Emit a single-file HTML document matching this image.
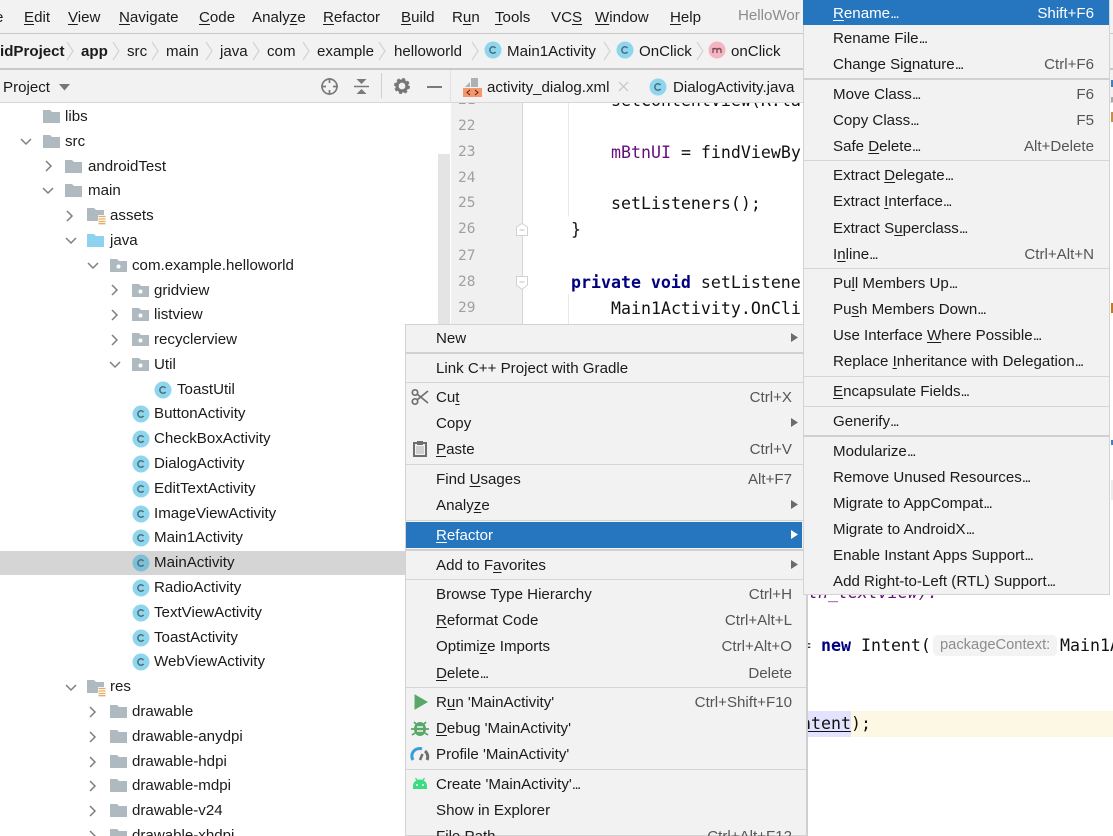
<!DOCTYPE html>
<html><head><meta charset="utf-8"><style>
html,body{margin:0;padding:0;background:#fff}
#p{position:relative;width:1113px;height:836px;overflow:hidden;background:#fff;font-family:"Liberation Sans",sans-serif;font-size:15.1px;color:#1b1b1b}
.t{position:absolute;white-space:nowrap;line-height:20px;height:20px;margin-top:1px}
.b{position:absolute}
.s{position:absolute;white-space:nowrap;line-height:20px;height:20px;color:#555;text-align:right;margin-top:1px}
.l{right:321px}.r{right:19px}
.g{position:absolute;color:#a0a0a0;font:14.5px/20px "DejaVu Sans Mono",monospace;left:0;width:26px;height:20px;margin-top:1px}
.c{position:absolute;white-space:pre;font:16.6px/20px "DejaVu Sans Mono",monospace;color:#111;height:20px;margin-top:1px}
svg{position:absolute;overflow:visible}
u{text-underline-offset:2px;text-decoration-skip-ink:none}
i.e{font-style:normal;letter-spacing:-1.5px}
</style></head><body><div id="p">
<svg width="0" height="0" style="left:0;top:0">
<defs>
<g id="fo"><path d="M0 0h7l2 2h8v11H0z" fill="#aeb9c0"/></g>
<g id="pk"><path d="M0 0h7l2 2h8v11H0z" fill="#aeb9c0"/><circle cx="8.500" cy="7.500" r="2" fill="#fff"/></g>
<g id="rs"><path d="M0 0h7l2 2h8v11H0z" fill="#aeb9c0"/><path d="M11 7h8v9h-8z" fill="#fff"/><path d="M11.500 8.500h7M11.500 11h7M11.500 13.500h7M11.500 15.700h7" stroke="#e3ad63" stroke-width="1.300"/></g>
<g id="cl"><circle cx="0" cy="0" r="8.500" fill="#8ed5ee"/><path d="M2.600 -1.900A3.200 3.200 0 1 0 2.600 1.900" fill="none" stroke="#4d6b78" stroke-width="1.500"/></g>
<path id="ar" d="M0 0l5 5-5 5" fill="none" stroke="#7f7f7f" stroke-width="1.500"/>
<path id="dn" d="M0 0l5 5 5-5" fill="none" stroke="#7f7f7f" stroke-width="1.500"/>
<path id="bc" d="M0 0l6 9-6 9" fill="none" stroke="#d4d4d4" stroke-width="1.300"/>
<path id="sm" d="M0 0l7 4.500-7 4.500z" fill="#6b6b6b"/>
</defs></svg>

<!-- top bars -->
<div class="b" style="left:0;top:0;width:1113px;height:102px;background:#f2f2f2"></div>
<div class="b" style="left:0;top:33px;width:1113px;height:1px;background:#c9c9c9"></div>
<div class="b" style="left:0;top:68px;width:1113px;height:2px;background:#c9c9c9"></div>
<div class="b" style="left:0;top:102px;width:1113px;height:1px;background:#d8d8d8"></div>
<div class="b" style="left:1111px;top:80px;width:2px;height:7px;background:#3b7fc4"></div>
<div class="b" style="left:1111px;top:97px;width:2px;height:5px;background:#a8a8a8"></div>
<div class="b" style="left:1111px;top:112px;width:2px;height:10px;background:#c98d4a"></div>
<div class="b" style="left:1111px;top:303px;width:2px;height:10px;background:#c4781f"></div>
<div class="b" style="left:1111px;top:440px;width:2px;height:5px;background:#3b7fc4"></div>
<div class="b" style="left:1111px;top:480px;width:2px;height:20px;background:#ececec"></div>

<span class="t" style="left:-5px;top:7px">e</span>
<span class="t" style="left:24px;top:7px"><u>E</u>dit</span>
<span class="t" style="left:68px;top:7px"><u>V</u>iew</span>
<span class="t" style="left:119px;top:7px"><u>N</u>avigate</span>
<span class="t" style="left:199px;top:7px"><u>C</u>ode</span>
<span class="t" style="left:252px;top:7px">Analy<u>z</u>e</span>
<span class="t" style="left:323px;top:7px"><u>R</u>efactor</span>
<span class="t" style="left:401px;top:7px"><u>B</u>uild</span>
<span class="t" style="left:452px;top:7px">R<u>u</u>n</span>
<span class="t" style="left:495px;top:7px"><u>T</u>ools</span>
<span class="t" style="left:551px;top:7px">VC<u>S</u></span>
<span class="t" style="left:595px;top:7px"><u>W</u>indow</span>
<span class="t" style="left:670px;top:7px"><u>H</u>elp</span>
<span class="t" style="left:738px;top:5px;color:#8c8c8c">HelloWor</span>

<!-- breadcrumb -->
<span class="t" style="left:0;top:41px;font-weight:bold">idProject</span>
<svg style="left:67px;top:42px" width="8" height="18"><use href="#bc"/></svg>
<span class="t" style="left:81px;top:41px;font-weight:bold">app</span>
<svg style="left:113px;top:42px" width="8" height="18"><use href="#bc"/></svg>
<span class="t" style="left:127px;top:41px">src</span>
<svg style="left:152px;top:42px" width="8" height="18"><use href="#bc"/></svg>
<span class="t" style="left:166px;top:41px">main</span>
<svg style="left:206px;top:42px" width="8" height="18"><use href="#bc"/></svg>
<span class="t" style="left:220px;top:41px">java</span>
<svg style="left:253px;top:42px" width="8" height="18"><use href="#bc"/></svg>
<span class="t" style="left:267px;top:41px">com</span>
<svg style="left:303px;top:42px" width="8" height="18"><use href="#bc"/></svg>
<span class="t" style="left:317px;top:41px">example</span>
<svg style="left:379px;top:42px" width="8" height="18"><use href="#bc"/></svg>
<span class="t" style="left:394px;top:41px">helloworld</span>
<svg style="left:472px;top:42px" width="8" height="18"><use href="#bc"/></svg>
<svg style="left:493px;top:50px" width="1" height="1"><use href="#cl"/></svg>
<span class="t" style="left:507px;top:41px">Main1Activity</span>
<svg style="left:604px;top:42px" width="8" height="18"><use href="#bc"/></svg>
<svg style="left:625px;top:50px" width="1" height="1"><use href="#cl"/></svg>
<span class="t" style="left:639px;top:41px">OnClick</span>
<svg style="left:697px;top:42px" width="8" height="18"><use href="#bc"/></svg>
<svg style="left:717px;top:50px" width="1" height="1"><circle r="8.500" fill="#f5b4c2"/><path d="M-4 3v-5M-4 -0.500q2-2 4 0v3.500M0 -0.500q2-2 4 0v3.500" fill="none" stroke="#7a4a55" stroke-width="1.300"/></svg>
<span class="t" style="left:731px;top:41px">onClick</span>

<!-- project toolbar -->
<span class="t" style="left:3px;top:77px">Project</span>
<svg style="left:59px;top:84px" width="12" height="7"><path d="M0 0h11l-5.500 6.500z" fill="#767676"/></svg>
<svg style="left:320px;top:77px" width="19" height="19"><circle cx="9.500" cy="9.500" r="7.500" fill="none" stroke="#7a7a7a" stroke-width="1.700"/><path d="M9.500 1v5M9.500 13v5M1 9.500h5M13 9.500h5" stroke="#7a7a7a" stroke-width="1.700"/></svg>
<svg style="left:354px;top:78px" width="15" height="17"><path d="M0 8.500h15" stroke="#7a7a7a" stroke-width="1.500"/><path d="M2.500 1h10L7.500 6zM2.500 16h10L7.500 11z" fill="#7a7a7a"/></svg>
<div class="b" style="left:381px;top:73px;width:1px;height:25px;background:#d0d0d0"></div>
<svg style="left:394px;top:78px" width="16" height="16"><circle cx="8" cy="8" r="5" fill="none" stroke="#767676" stroke-width="3.200"/><circle cx="8" cy="8" r="7" fill="none" stroke="#767676" stroke-width="2" stroke-dasharray="3 2.500"/></svg>
<div class="b" style="left:427px;top:86px;width:15px;height:2px;background:#7a7a7a"></div>
<div class="b" style="left:450px;top:70px;width:1px;height:32px;background:#e2e2e2"></div>
<svg style="left:463px;top:78px" width="20" height="19"><path d="M2 9l5-5v5zM8 0h7v9H8z" fill="#aab2b8"/><rect x="0" y="10" width="19" height="9" fill="#f5966b"/><path d="M7 12l-3 2.500 3 2.500M12 12l3 2.500-3 2.500" fill="none" stroke="#4a2b1d" stroke-width="1"/></svg>
<span class="t" style="left:487px;top:77px">activity_dialog.xml</span>
<svg style="left:619px;top:82px" width="10" height="10"><path d="M0 0l9 9M9 0l-9 9" stroke="#c4c4c4" stroke-width="1.200"/></svg>
<svg style="left:658px;top:87px" width="1" height="1"><use href="#cl"/></svg>
<span class="t" style="left:673px;top:77px">DialogActivity.java</span>

<!-- scrollbar strip -->
<div class="b" style="left:438px;top:154px;width:12px;height:170px;background:#e4e4e4"></div>

<!-- gutter -->
<div class="b" style="left:451px;top:103px;width:71px;height:221px;background:#f0f0f0"></div>
<div class="b" style="left:522px;top:103px;width:1px;height:221px;background:#d5d5d5"></div>
<div class="b" style="left:568px;top:103px;width:1px;height:113px;background:#e8e8e8"></div>
<div class="b" style="left:568px;top:294px;width:1px;height:30px;background:#e8e8e8"></div>
<div class="b" style="left:451px;top:103px;width:30px;height:12px;overflow:hidden"><span class="g" style="left:7px;top:-14px">21</span></div>
<span class="g" style="left:458px;top:115px">22</span>
<span class="g" style="left:458px;top:141px">23</span>
<span class="g" style="left:458px;top:167px">24</span>
<span class="g" style="left:458px;top:192px">25</span>
<span class="g" style="left:458px;top:218px">26</span>
<span class="g" style="left:458px;top:245px">27</span>
<span class="g" style="left:458px;top:271px">28</span>
<span class="g" style="left:458px;top:297px">29</span>
<svg style="left:516px;top:223px" width="12" height="13"><path d="M.500 12.500V4L6 .500 11.500 4v8.500z" fill="#fff" stroke="#d2d2d2"/><path d="M3.500 7h5" stroke="#c0c0c0"/></svg>
<svg style="left:516px;top:276px" width="12" height="14"><path d="M.500 .500V9L6 13.500 11.500 9V.500z" fill="#fff" stroke="#d2d2d2"/><path d="M3.500 6h5" stroke="#c0c0c0"/></svg>

<!-- code -->
<div class="b" style="left:523px;top:103px;width:280px;height:221px;overflow:hidden">
<span class="c" style="left:88px;top:-13px">setContentView(R.la</span>
<span class="c" style="left:88px;top:39px"><span style="color:#660e7a">mBtnUI</span> = findViewBy</span>
<span class="c" style="left:88px;top:90px">setListeners();</span>
<span class="c" style="left:48px;top:116px">}</span>
<span class="c" style="left:48px;top:169px"><span style="color:#000080;font-weight:bold">private void</span> setListene</span>
<span class="c" style="left:88px;top:195px">Main1Activity.OnCli</span>
</div>
<span class="c" style="left:788px;top:582px;color:#660e7a;font-style:italic">with_textview).</span>
<span class="c" style="left:801px;top:635px;color:#333">=</span>
<span class="c" style="left:821px;top:635px"><span style="color:#000080;font-weight:bold">new</span> Intent(</span>
<div class="b" style="left:933px;top:635px;width:124px;height:21px;background:#f3f3f3;border-radius:5px"></div>
<span class="t" style="left:940px;top:634px;color:#8c8c8c;font-size:14.7px">packageContext:</span>
<span class="c" style="left:1060px;top:635px">Main1A</span>
<div class="b" style="left:806px;top:711px;width:307px;height:26px;background:#fdf8e3"></div>
<div class="b" style="left:806px;top:711px;width:45px;height:26px;background:#e3e3ff"></div>
<span class="c" style="left:801px;top:713px"><u>ntent</u>);</span>

<!-- tree -->
<svg style="left:43px;top:110px" width="18" height="14"><use href="#fo"/></svg><span class="t" style="left:65px;top:106px">libs</span>
<svg style="left:21px;top:139px" width="11" height="6"><use href="#dn"/></svg><svg style="left:43px;top:135px" width="18" height="14"><use href="#fo"/></svg><span class="t" style="left:65px;top:131px">src</span>
<svg style="left:46px;top:161px" width="6" height="11"><use href="#ar"/></svg><svg style="left:65px;top:160px" width="18" height="14"><use href="#fo"/></svg><span class="t" style="left:88px;top:156px">androidTest</span>
<svg style="left:43px;top:188px" width="11" height="6"><use href="#dn"/></svg><svg style="left:65px;top:184px" width="18" height="14"><use href="#fo"/></svg><span class="t" style="left:88px;top:180px">main</span>
<svg style="left:67px;top:211px" width="6" height="11"><use href="#ar"/></svg><svg style="left:87px;top:208px" width="20" height="18"><use href="#rs"/></svg><span class="t" style="left:110px;top:205px">assets</span>
<svg style="left:66px;top:238px" width="11" height="6"><use href="#dn"/></svg><svg style="left:87px;top:234px" width="18" height="14"><path d="M0 0h7l2 2h8v11H0z" fill="#8dd3ef"/></svg><span class="t" style="left:110px;top:230px">java</span>
<svg style="left:88px;top:263px" width="11" height="6"><use href="#dn"/></svg><svg style="left:110px;top:259px" width="18" height="14"><use href="#pk"/></svg><span class="t" style="left:132px;top:255px">com.example.helloworld</span>
<svg style="left:112px;top:285px" width="6" height="11"><use href="#ar"/></svg><svg style="left:132px;top:284px" width="18" height="14"><use href="#pk"/></svg><span class="t" style="left:154px;top:280px">gridview</span>
<svg style="left:112px;top:310px" width="6" height="11"><use href="#ar"/></svg><svg style="left:132px;top:308px" width="18" height="14"><use href="#pk"/></svg><span class="t" style="left:154px;top:304px">listview</span>
<svg style="left:112px;top:335px" width="6" height="11"><use href="#ar"/></svg><svg style="left:132px;top:333px" width="18" height="14"><use href="#pk"/></svg><span class="t" style="left:154px;top:329px">recyclerview</span>
<svg style="left:110px;top:362px" width="11" height="6"><use href="#dn"/></svg><svg style="left:132px;top:358px" width="18" height="14"><use href="#pk"/></svg><span class="t" style="left:154px;top:354px">Util</span>
<svg style="left:163px;top:390px" width="1" height="1"><use href="#cl"/></svg><span class="t" style="left:177px;top:379px">ToastUtil</span>
<div class="b" style="left:0;top:551px;width:405px;height:24px;background:#d5d5d5"></div>
<svg style="left:141px;top:414px" width="1" height="1"><use href="#cl"/></svg><span class="t" style="left:154px;top:403px">ButtonActivity</span>
<svg style="left:141px;top:439px" width="1" height="1"><use href="#cl"/></svg><span class="t" style="left:154px;top:428px">CheckBoxActivity</span>
<svg style="left:141px;top:464px" width="1" height="1"><use href="#cl"/></svg><span class="t" style="left:154px;top:453px">DialogActivity</span>
<svg style="left:141px;top:489px" width="1" height="1"><use href="#cl"/></svg><span class="t" style="left:154px;top:478px">EditTextActivity</span>
<svg style="left:141px;top:514px" width="1" height="1"><use href="#cl"/></svg><span class="t" style="left:154px;top:503px">ImageViewActivity</span>
<svg style="left:141px;top:538px" width="1" height="1"><use href="#cl"/></svg><span class="t" style="left:154px;top:527px">Main1Activity</span>
<svg style="left:141px;top:563px" width="1" height="1"><circle r="8.500" fill="#7cc0d8"/><path d="M2.600 -1.900A3.200 3.200 0 1 0 2.600 1.900" fill="none" stroke="#4d6b78" stroke-width="1.500"/></svg><span class="t" style="left:154px;top:552px">MainActivity</span>
<svg style="left:141px;top:588px" width="1" height="1"><use href="#cl"/></svg><span class="t" style="left:154px;top:577px">RadioActivity</span>
<svg style="left:141px;top:613px" width="1" height="1"><use href="#cl"/></svg><span class="t" style="left:154px;top:602px">TextViewActivity</span>
<svg style="left:141px;top:638px" width="1" height="1"><use href="#cl"/></svg><span class="t" style="left:154px;top:627px">ToastActivity</span>
<svg style="left:141px;top:662px" width="1" height="1"><use href="#cl"/></svg><span class="t" style="left:154px;top:651px">WebViewActivity</span>
<svg style="left:66px;top:685px" width="11" height="6"><use href="#dn"/></svg><svg style="left:87px;top:680px" width="20" height="18"><use href="#rs"/></svg><span class="t" style="left:110px;top:676px">res</span>
<svg style="left:90px;top:707px" width="6" height="11"><use href="#ar"/></svg><svg style="left:110px;top:705px" width="18" height="14"><use href="#fo"/></svg><span class="t" style="left:132px;top:701px">drawable</span>
<svg style="left:90px;top:732px" width="6" height="11"><use href="#ar"/></svg><svg style="left:110px;top:730px" width="18" height="14"><use href="#fo"/></svg><span class="t" style="left:132px;top:726px">drawable-anydpi</span>
<svg style="left:90px;top:757px" width="6" height="11"><use href="#ar"/></svg><svg style="left:110px;top:755px" width="18" height="14"><use href="#fo"/></svg><span class="t" style="left:132px;top:751px">drawable-hdpi</span>
<svg style="left:90px;top:781px" width="6" height="11"><use href="#ar"/></svg><svg style="left:110px;top:779px" width="18" height="14"><use href="#fo"/></svg><span class="t" style="left:132px;top:775px">drawable-mdpi</span>
<svg style="left:90px;top:806px" width="6" height="11"><use href="#ar"/></svg><svg style="left:110px;top:804px" width="18" height="14"><use href="#fo"/></svg><span class="t" style="left:132px;top:800px">drawable-v24</span>
<svg style="left:90px;top:831px" width="6" height="11"><use href="#ar"/></svg><svg style="left:110px;top:829px" width="18" height="14"><use href="#fo"/></svg><span class="t" style="left:132px;top:825px">drawable-xhdpi</span>

<!-- left context menu -->
<div class="b" style="left:405px;top:324px;width:403px;height:512px;background:#f2f2f2;border:1px solid #d3d3d3;border-right:2px solid #cfcfcf;box-sizing:border-box"></div>
<div class="b" style="left:406px;top:352px;width:397px;height:2px;background:#d0d0d0"></div>
<div class="b" style="left:406px;top:382px;width:397px;height:1px;background:#d5d5d5"></div>
<div class="b" style="left:406px;top:464px;width:397px;height:1px;background:#d5d5d5"></div>
<div class="b" style="left:406px;top:520px;width:397px;height:1px;background:#d5d5d5"></div>
<div class="b" style="left:406px;top:522px;width:396px;height:26px;background:#2675bf"></div>
<div class="b" style="left:406px;top:549px;width:397px;height:2px;background:#d0d0d0"></div>
<div class="b" style="left:406px;top:579px;width:400px;height:1px;background:#d5d5d5"></div>
<div class="b" style="left:406px;top:687px;width:400px;height:1px;background:#d5d5d5"></div>
<div class="b" style="left:406px;top:769px;width:400px;height:1px;background:#d5d5d5"></div>

<span class="t" style="left:436px;top:328px">New</span><svg style="left:791px;top:333px" width="8" height="10"><use href="#sm"/></svg>
<span class="t" style="left:436px;top:358px">Link C++ Project with Gradle</span>
<svg style="left:411px;top:388px" width="18" height="18"><circle cx="4" cy="4.500" r="2.700" fill="none" stroke="#6e6e6e" stroke-width="1.700"/><circle cx="4" cy="13.500" r="2.700" fill="none" stroke="#6e6e6e" stroke-width="1.700"/><path d="M6 6l11 9M6 12L17 3" stroke="#6e6e6e" stroke-width="1.700"/></svg>
<span class="t" style="left:436px;top:387px">Cu<u>t</u></span><span class="s l" style="top:387px">Ctrl+X</span>
<span class="t" style="left:436px;top:413px">Copy</span><svg style="left:791px;top:418px" width="8" height="10"><use href="#sm"/></svg>
<svg style="left:413px;top:440px" width="14" height="17"><path d="M1 3h12v13H1z" fill="none" stroke="#6e6e6e" stroke-width="2"/><rect x="4" y="1" width="6" height="4" fill="#6e6e6e"/><rect x="3" y="6" width="8" height="8" fill="#d0d0d0"/></svg>
<span class="t" style="left:436px;top:439px"><u>P</u>aste</span><span class="s l" style="top:439px">Ctrl+V</span>
<span class="t" style="left:436px;top:469px">Find <u>U</u>sages</span><span class="s l" style="top:469px">Alt+F7</span>
<span class="t" style="left:436px;top:495px">Analy<u>z</u>e</span><svg style="left:791px;top:500px" width="8" height="10"><use href="#sm"/></svg>
<span class="t" style="left:436px;top:525px;color:#fff"><u>R</u>efactor</span><svg style="left:791px;top:530px" width="8" height="10"><path d="M0 0l7 4.500-7 4.500z" fill="#fff"/></svg>
<span class="t" style="left:436px;top:555px">Add to F<u>a</u>vorites</span><svg style="left:791px;top:560px" width="8" height="10"><use href="#sm"/></svg>
<span class="t" style="left:436px;top:584px">Browse Type Hierarchy</span><span class="s l" style="top:584px">Ctrl+H</span>
<span class="t" style="left:436px;top:610px"><u>R</u>eformat Code</span><span class="s l" style="top:610px">Ctrl+Alt+L</span>
<span class="t" style="left:436px;top:636px">Optimi<u>z</u>e Imports</span><span class="s l" style="top:636px">Ctrl+Alt+O</span>
<span class="t" style="left:436px;top:663px"><u>D</u>elete<i class="e">...</i></span><span class="s l" style="top:663px">Delete</span>
<svg style="left:414px;top:694px" width="14" height="16"><path d="M1 1l12 7-12 7z" fill="#59a869" stroke="#59a869"/></svg>
<span class="t" style="left:436px;top:692px">R<u>u</u>n 'MainActivity'</span><span class="s l" style="top:692px">Ctrl+Shift+F10</span>
<svg style="left:411px;top:719px" width="18" height="18"><ellipse cx="9" cy="10" rx="6" ry="7" fill="#59a869"/><path d="M3 3l3 3M15 3l-3 3M0 10h3M15 10h3M1 16l3-2M17 16l-3-2" stroke="#59a869" stroke-width="1.700"/><path d="M6 8h6M6 12h6" stroke="#f2f2f2" stroke-width="1.500"/></svg>
<span class="t" style="left:436px;top:718px"><u>D</u>ebug 'MainActivity'</span>
<svg style="left:411px;top:746px" width="18" height="15"><path d="M2 14A7.500 7.500 0 0 1 11 3" fill="none" stroke="#389fd6" stroke-width="3"/><path d="M14 5a7.500 7.500 0 0 1 2 9" fill="none" stroke="#6e6e6e" stroke-width="3"/><path d="M9 14l2.500-6" stroke="#6e6e6e" stroke-width="2.500"/></svg>
<span class="t" style="left:436px;top:744px">Profile 'MainActivity'</span>
<svg style="left:412px;top:777px" width="16" height="13"><path d="M1 12V9a7 6.500 0 0 1 14 0v3z" fill="#3ddc84"/><path d="M3.500 1l2 3M12.500 1l-2 3" stroke="#3ddc84" stroke-width="1.300"/><circle cx="5" cy="8" r="1" fill="#f2f2f2"/><circle cx="11" cy="8" r="1" fill="#f2f2f2"/></svg>
<span class="t" style="left:436px;top:774px">Create 'MainActivity'<i class="e">...</i></span>
<span class="t" style="left:436px;top:800px">Show in Explorer</span>
<span class="t" style="left:436px;top:826px">File Path</span><span class="s l" style="top:826px">Ctrl+Alt+F12</span>

<!-- right refactor menu -->
<div class="b" style="left:803px;top:0;width:307px;height:595px;background:#f2f2f2;border:1px solid #d3d3d3;border-top:0;box-sizing:border-box"></div>
<div class="b" style="left:803px;top:0;width:306px;height:25px;background:#2675bf"></div>
<div class="b" style="left:803px;top:78px;width:306px;height:2px;background:#d0d0d0"></div>
<div class="b" style="left:803px;top:160px;width:306px;height:1px;background:#d5d5d5"></div>
<div class="b" style="left:803px;top:268px;width:306px;height:1px;background:#d5d5d5"></div>
<div class="b" style="left:803px;top:376px;width:306px;height:1px;background:#d5d5d5"></div>
<div class="b" style="left:803px;top:406px;width:306px;height:1px;background:#d5d5d5"></div>
<div class="b" style="left:803px;top:435px;width:306px;height:2px;background:#d0d0d0"></div>

<span class="t" style="left:833px;top:3px;color:#fff"><u>R</u>ename<i class="e">...</i></span><span class="s r" style="top:3px;color:#fff">Shift+F6</span>
<span class="t" style="left:833px;top:28px">Rename File<i class="e">...</i></span>
<span class="t" style="left:833px;top:54px">Change Si<u>g</u>nature<i class="e">...</i></span><span class="s r" style="top:54px">Ctrl+F6</span>
<span class="t" style="left:833px;top:84px">Move Class<i class="e">...</i></span><span class="s r" style="top:84px">F6</span>
<span class="t" style="left:833px;top:110px">Copy Class<i class="e">...</i></span><span class="s r" style="top:110px">F5</span>
<span class="t" style="left:833px;top:136px">Safe <u>D</u>elete<i class="e">...</i></span><span class="s r" style="top:136px">Alt+Delete</span>
<span class="t" style="left:833px;top:165px">Extract <u>D</u>elegate<i class="e">...</i></span>
<span class="t" style="left:833px;top:191px">Extract <u>I</u>nterface<i class="e">...</i></span>
<span class="t" style="left:833px;top:218px">Extract S<u>u</u>perclass<i class="e">...</i></span>
<span class="t" style="left:833px;top:244px">I<u>n</u>line<i class="e">...</i></span><span class="s r" style="top:244px">Ctrl+Alt+N</span>
<span class="t" style="left:833px;top:273px">Pu<u>l</u>l Members Up<i class="e">...</i></span>
<span class="t" style="left:833px;top:299px">Pu<u>s</u>h Members Down<i class="e">...</i></span>
<span class="t" style="left:833px;top:325px">Use Interface <u>W</u>here Possible<i class="e">...</i></span>
<span class="t" style="left:833px;top:351px">Replace <u>I</u>nheritance with Delegation<i class="e">...</i></span>
<span class="t" style="left:833px;top:381px"><u>E</u>ncapsulate Fields<i class="e">...</i></span>
<span class="t" style="left:833px;top:411px">Generify<i class="e">...</i></span>
<span class="t" style="left:833px;top:441px">Modularize<i class="e">...</i></span>
<span class="t" style="left:833px;top:467px">Remove Unused Resources<i class="e">...</i></span>
<span class="t" style="left:833px;top:493px">Migrate to AppCompat<i class="e">...</i></span>
<span class="t" style="left:833px;top:519px">Migrate to AndroidX<i class="e">...</i></span>
<span class="t" style="left:833px;top:545px">Enable Instant Apps Support<i class="e">...</i></span>
<span class="t" style="left:833px;top:571px">Add Right-to-Left (RTL) Support<i class="e">...</i></span>
</div></body></html>
